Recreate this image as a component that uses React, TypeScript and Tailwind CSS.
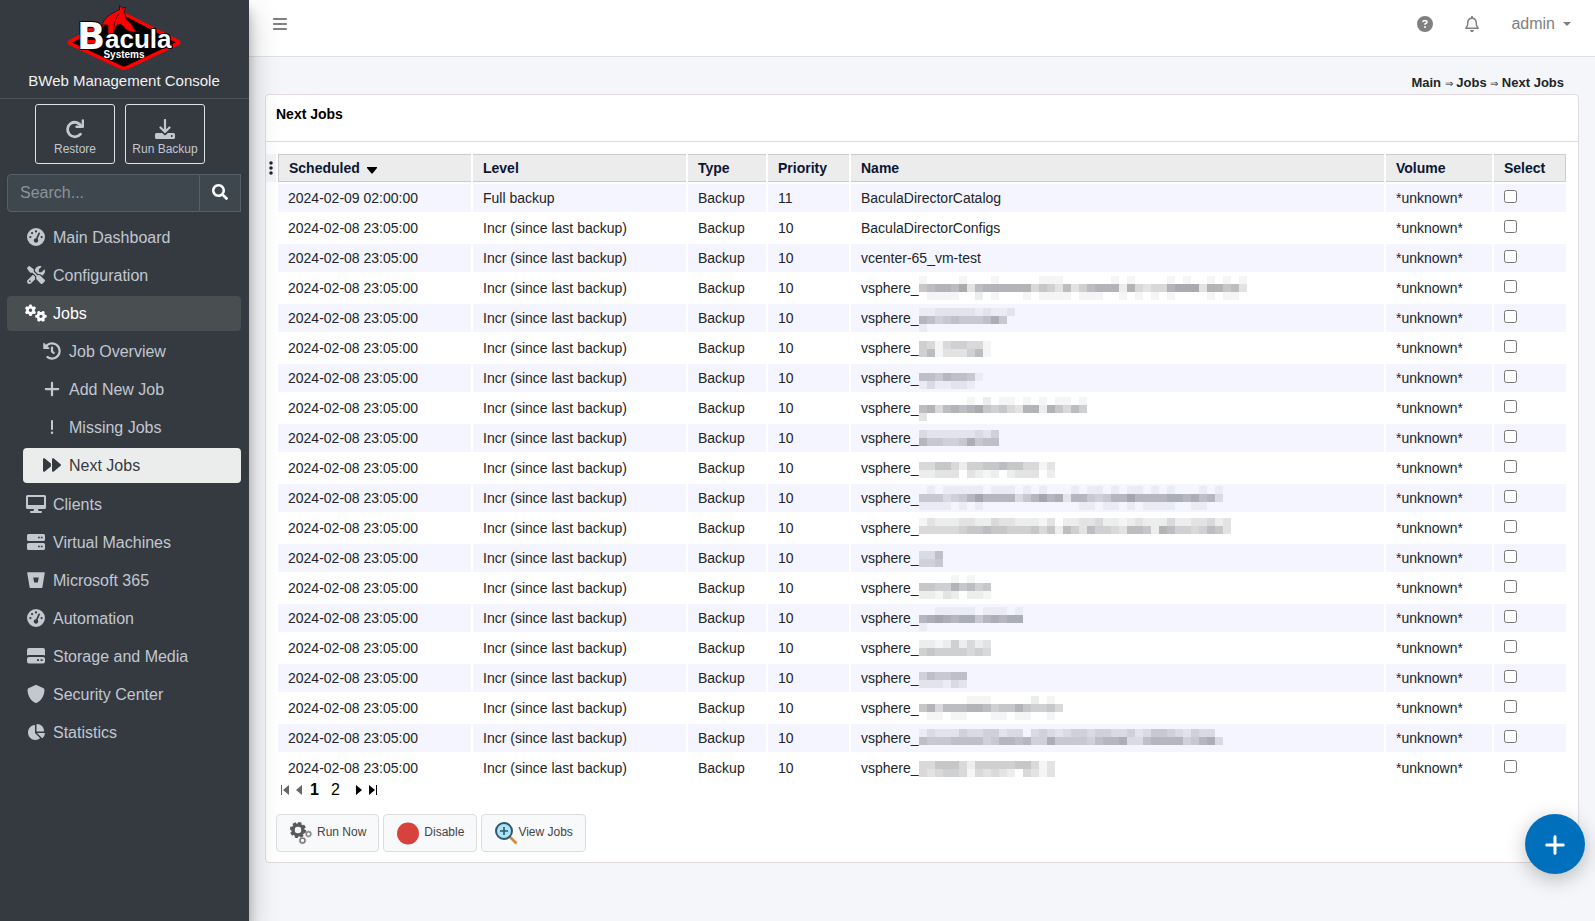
import { useState } from "react";
import type { ComponentType, ReactNode } from "react";
import clsx from "clsx";
import { FaHistory, FaSearch } from "react-icons/fa";
import {
  FaBars,
  FaBitbucket,
  FaChartPie,
  FaCircleQuestion,
  FaEllipsisVertical,
  FaExclamation,
  FaForward,
  FaGaugeHigh,
  FaGears,
  FaPlus,
  FaRegBell,
  FaScrewdriverWrench,
  FaShield
} from "react-icons/fa6";

type IconProps = { className?: string };

function DesktopIcon({ className }: IconProps) {
  return (
    <svg viewBox="0 0 20 18" className={className} fill="currentColor" aria-hidden="true">
      <path
        fillRule="evenodd"
        d="M1.500 0h17A1.500 1.500 0 0 1 20 1.500v11a1.500 1.500 0 0 1-1.500 1.500H12l.5 2h2.500a1 1 0 0 1 0 2H5a1 1 0 0 1 0-2h2.500l.5-2H1.500A1.500 1.500 0 0 1 0 12.500v-11A1.500 1.500 0 0 1 1.500 0ZM2 2v8h16V2Z"
      />
    </svg>
  );
}

function ServerIcon({ className }: IconProps) {
  return (
    <svg viewBox="0 0 18 18" className={className} fill="currentColor" fillRule="evenodd" aria-hidden="true">
      <path d="M1.500 1h15a1.500 1.500 0 0 1 1.500 1.500v4A1.500 1.500 0 0 1 16.500 8h-15A1.500 1.500 0 0 1 0 6.500v-4A1.500 1.500 0 0 1 1.500 1ZM11 3.700v1.600h1.800V3.700Zm2.800 0v1.600h1.800V3.700Z" />
      <path d="M1.500 10h15a1.500 1.500 0 0 1 1.500 1.500v4a1.500 1.500 0 0 1-1.500 1.500h-15A1.500 1.500 0 0 1 0 15.500v-4A1.500 1.500 0 0 1 1.500 10ZM11 12.700v1.600h1.800v-1.600Zm2.800 0v1.600h1.800v-1.600Z" />
    </svg>
  );
}

function DriveIcon({ className }: IconProps) {
  return (
    <svg viewBox="0 0 18 18" className={className} fill="currentColor" fillRule="evenodd" aria-hidden="true">
      <path d="M2 1h14a2 2 0 0 1 2 2v5.500q-.8-.5-2-.5H2q-1.200 0-2 .5V3a2 2 0 0 1 2-2Z" />
      <path d="M2 10h14a2 2 0 0 1 2 2v2.500a2 2 0 0 1-2 2H2a2 2 0 0 1-2-2V12a2 2 0 0 1 2-2Zm8 2.200v1.900h2v-1.900Zm3.600 0v1.900h2v-1.900Z" />
    </svg>
  );
}

type NavEntry = {
  label: string;
  icon: ComponentType<IconProps>;
  size?: string;
  children?: NavEntry[];
};

const NAV: NavEntry[] = [
  { label: "Main Dashboard", icon: FaGaugeHigh },
  { label: "Configuration", icon: FaScrewdriverWrench },
  {
    label: "Jobs",
    icon: FaGears,
    size: "size-[22px]",
    children: [
      { label: "Job Overview", icon: FaHistory },
      { label: "Add New Job", icon: FaPlus },
      { label: "Missing Jobs", icon: FaExclamation, size: "size-4" },
      { label: "Next Jobs", icon: FaForward }
    ]
  },
  { label: "Clients", icon: DesktopIcon, size: "h-[18px] w-5" },
  { label: "Virtual Machines", icon: ServerIcon },
  { label: "Microsoft 365", icon: FaBitbucket },
  { label: "Automation", icon: FaGaugeHigh },
  { label: "Storage and Media", icon: DriveIcon },
  { label: "Security Center", icon: FaShield },
  { label: "Statistics", icon: FaChartPie }
];

// Redacted part of a job name: one digit per 8px block, 0 is clear and 9 is darkest.
type Mask = { top: number; strips: string[] };

type Job = { scheduled: string; level: string; priority: number; name: string; mask?: Mask };

const incr = (name: string, mask?: Mask): Job => ({
  scheduled: "2024-02-08 23:05:00",
  level: "Incr (since last backup)",
  priority: 10,
  name,
  mask
});

const masked = (top: number, ...strips: string[]) => incr("vsphere_", { top, strips });

const JOBS: Job[] = [
  { scheduled: "2024-02-09 02:00:00", level: "Full backup", priority: 11, name: "BaculaDirectorCatalog" },
  incr("BaculaDirectorConfigs"),
  incr("vcenter-65_vm-test"),
  masked(
    2,
    "10000100010000011100000010100001010010101",
    "67887937888888465373578882843448999388673",
    "01111002010001011110111001010101000010110"
  ),
  masked(4, "112222212112", "76456555685", "1"),
  masked(7, "541455441", "571333571"),
  masked(9, "66576651", "1311221"),
  masked(3, "000000102011010101101", "784787896564388286475", "3"),
  masked(6, "3222222324", "7554458566"),
  masked(8, "44664255667664413", "22333032120233302"),
  masked(
    2,
    "01011111011101010001011010110101000101",
    "55534579777735797827754577977778878673",
    "11110101000000000000110110101111001100"
  ),
  masked(
    4,
    "132223322433222130223342212322242233423",
    "444445667665556462753755437762875545763"
  ),
  masked(7, "336", "445"),
  masked(1, "000010100", "665586756", "221320221"),
  masked(3, "0011111011101", "7898788578788", "1"),
  masked(6, "221252423", "565555454"),
  masked(8, "465566", "222132"),
  masked(2, "000000111000002010", "684777887566865564", "011011000110110010"),
  masked(
    5,
    "1322243344233034323443443342355432433",
    "65556666457767448555546778336777745783"
  ),
  masked(7, "44666425555566413", "43455414343204313")
];

function Logo() {
  return (
    <svg viewBox="0 0 114 66" className="h-[66px] w-[114px]" role="img" aria-label="Bacula Systems">
      <path d="M57 7 L112 35 Q115 37.500 112 40 L61 64 Q57 66 53 64 L2 40 Q-1 37.500 2 35 Z" fill="#f00" />
      <path d="M57 10.500 L109 37.500 L59 61 Q57 62 55 61 L5 37.500 Z" fill="#000" />
      <path
        d="M35 20 Q38 11 48 7 L50 5.500 L52.500 5 L52.500 0.500 L55.500 3 L59 2.500 L57 6.500 L58 9 L59 14 Q65 18 69 27 Q61 28 57 22 Q54 18 50 20 Q47 25 46 31 L41 37 L41 20 Z"
        fill="#f00"
        stroke="#111"
        strokeWidth="0.800"
      />
      <path d="M52 9 Q47 14 46.500 27" fill="none" stroke="#111" strokeWidth="0.800" />
      <g fontWeight="bold" fill="#fff" stroke="#000" strokeWidth="2" paintOrder="stroke" strokeLinejoin="round">
        <text x="10" y="44" fontSize="37" fontFamily="DejaVu Sans, sans-serif">
          B
        </text>
        <text x="38" y="43" fontSize="26" fontFamily="Liberation Sans, sans-serif">
          acula
        </text>
      </g>
      <path d="M21 23.500h6v3h-6zM21 35h7v3.500h-7z" fill="#f00" />
      <text x="57" y="53" textAnchor="middle" fontSize="10" fontWeight="bold" fontFamily="Liberation Sans, sans-serif" fill="#fff">
        Systems
      </text>
    </svg>
  );
}

function RestoreIcon() {
  return (
    <svg viewBox="0 0 20 20" className="mb-0.5 size-5" fill="none" stroke="currentColor" strokeWidth="2.800" aria-hidden="true">
      <path d="M15.500 15.200A7.300 7.300 0 1 1 16.500 7.500" strokeLinecap="round" />
      <path d="M17.800 1.500v6.300H11.500" strokeLinecap="round" strokeLinejoin="round" strokeWidth="2.400" />
    </svg>
  );
}

function BackupIcon() {
  return (
    <svg viewBox="0 0 20 20" className="mb-0.5 size-5" fill="none" aria-hidden="true">
      <path d="M10 1v11M5.500 8.500 10 13l4.500-4.500" stroke="currentColor" strokeWidth="2.200" strokeLinecap="round" strokeLinejoin="round" />
      <path
        fillRule="evenodd"
        d="M1.500 14H7l3 2.500 3-2.500h5.500a1.500 1.500 0 0 1 1.500 1.500v3a1.500 1.500 0 0 1-1.500 1.500h-17A1.500 1.500 0 0 1 0 18.500v-3A1.500 1.500 0 0 1 1.500 14Zm14.500 2v2h1.500v-2Z"
        fill="currentColor"
      />
    </svg>
  );
}

function NavItem({ entry, child, selected, onSelect }: {
  entry: NavEntry;
  child?: boolean;
  selected: string;
  onSelect: (label: string) => void;
}) {
  const Icon = entry.icon;
  const active = entry.label === selected;
  const open = entry.children?.some((item) => item.label === selected);

  return (
    <li>
      <a
        href="#"
        onClick={(event) => {
          event.preventDefault();
          if (!entry.children) onSelect(entry.label);
        }}
        className={clsx(
          "flex h-[35px] items-center rounded pl-[18px] text-base",
          active && child && "bg-[#ebedec] text-[#343a40]",
          ((active && !child) || open) && "bg-[#494e51] text-white",
          !active && !open && "text-[#c2c7d0]"
        )}
      >
        <span className="flex w-[22px] shrink-0 justify-center pb-0.5">
          <Icon className={entry.size ?? "size-[18px]"} />
        </span>
        <span className="ml-1.5">{entry.label}</span>
      </a>
      {entry.children && (
        <ul className="mt-[3px] flex flex-col gap-[3px] pb-px pl-4">
          {entry.children.map((item) => (
            <NavItem key={item.label} entry={item} child selected={selected} onSelect={onSelect} />
          ))}
        </ul>
      )}
    </li>
  );
}

function Sidebar() {
  const [selected, setSelected] = useState("Next Jobs");

  return (
    <aside className="z-10 flex w-[249px] shrink-0 flex-col bg-[#343a40] shadow-[0_14px_28px_rgba(0,0,0,0.25),0_10px_10px_rgba(0,0,0,0.22)]">
      <a href="#" className="flex flex-col items-center border-b border-[#4b545c] pt-[5px] pr-px text-[15px] leading-5 text-[#f0f1f2]">
        <Logo />
        <span className="pb-[7px]">BWeb Management Console</span>
      </a>

      <div className="mt-[5px] flex justify-center gap-[10px] pr-[9px]">
        <button type="button" className="flex h-[60px] w-20 flex-col items-center justify-end rounded-[3px] border border-[#dee2e6] pb-1.5 text-xs text-[#c2c7d0]">
          <RestoreIcon />
          Restore
        </button>
        <button type="button" className="flex h-[60px] w-20 flex-col items-center justify-end rounded-[3px] border border-[#dee2e6] pb-1.5 text-xs text-[#c2c7d0]">
          <BackupIcon />
          Run Backup
        </button>
      </div>

      <form className="mt-[10px] mr-2 ml-[7px] flex h-[38px]" onSubmit={(event) => event.preventDefault()}>
        <input
          type="search"
          aria-label="Search"
          placeholder="Search..."
          className="min-w-0 flex-1 rounded-l border border-[#56606a] bg-[#3f474e] px-3 text-base text-white outline-none placeholder:text-[#8b939b]"
        />
        <button type="submit" aria-label="Search" className="flex w-[41px] items-center justify-center border border-l-0 border-[#56606a] bg-[#3f474e] pb-0.5 text-white">
          <FaSearch className="size-4" />
        </button>
      </form>

      <nav className="mt-2 pr-2 pl-[7px]">
        <ul className="flex flex-col gap-[3px]">
          {NAV.map((entry) => (
            <NavItem key={entry.label} entry={entry} selected={selected} onSelect={setSelected} />
          ))}
        </ul>
      </nav>
    </aside>
  );
}

function TopBar() {
  return (
    <header className="flex h-[57px] items-start border-b border-[#dee2e6] bg-white pr-6 pl-[23px] text-[#808080]">
      <button type="button" aria-label="Toggle menu" className="mt-4">
        <FaBars className="size-4" />
      </button>
      <div className="mt-3 ml-auto flex h-6 items-center">
        <button type="button" aria-label="Help">
          <FaCircleQuestion className="size-4" />
        </button>
        <button type="button" aria-label="Notifications" className="ml-[31px]">
          <FaRegBell className="size-4" />
        </button>
        <button type="button" className="ml-[31px] flex items-center gap-2 text-base leading-6">
          admin
          <svg viewBox="0 0 8 4" className="h-1 w-2" aria-hidden="true">
            <path d="M0 0h8L4 4Z" fill="currentColor" />
          </svg>
        </button>
      </div>
    </header>
  );
}

function NameMask({ mask }: { mask: Mask }) {
  return (
    <svg viewBox="0 0 328 28" className="h-7 w-[328px] overflow-visible" shapeRendering="crispEdges" aria-hidden="true">
      {mask.strips.map((strip, row) =>
        [...strip].map((digit, col) => (
          <rect
            key={`${row}-${col}`}
            x={col * 8}
            y={mask.top + row * 8}
            width="8"
            height="8"
            fill="#1c2029"
            fillOpacity={Number(digit) * 0.042}
          />
        ))
      )}
    </svg>
  );
}

function JobsTable() {
  const headCell = "h-7 border-y border-[#ccc] bg-[#ececec] px-[10px] text-left font-bold text-[#0b1633]";

  return (
    <table className="w-full table-fixed border-separate border-spacing-0.5 text-sm leading-5 text-[#212529]">
      <colgroup>
        <col className="w-[193px]" />
        <col className="w-[213px]" />
        <col className="w-[78px]" />
        <col className="w-[81px]" />
        <col />
        <col className="w-[106px]" />
        <col className="w-[72px]" />
      </colgroup>
      <thead>
        <tr>
          <th scope="col" aria-sort="descending" className={clsx(headCell, "border-l")}>
            <button type="button" className="flex items-center gap-[7px] font-bold">
              Scheduled
              <svg viewBox="0 0 10 7" className="mt-1 h-[7px] w-[10px]" aria-hidden="true">
                <path d="M0 0h10v1L5.500 6.500h-1L0 1Z" fill="#000" />
              </svg>
            </button>
          </th>
          {["Level", "Type", "Priority", "Name", "Volume"].map((label) => (
            <th key={label} scope="col" className={headCell}>
              {label}
            </th>
          ))}
          <th scope="col" className={clsx(headCell, "border-r")}>
            Select
          </th>
        </tr>
      </thead>
      <tbody>
        {JOBS.map((job, index) => (
          <tr key={index} className="odd:*:bg-[#f5f5ff]">
            <td className="h-7 px-[10px]">{job.scheduled}</td>
            <td className="px-[10px]">{job.level}</td>
            <td className="px-[10px]">Backup</td>
            <td className="px-[10px]">{job.priority}</td>
            <td className="px-[10px]">
              <div className="flex h-7 items-center">
                {job.name}
                {job.mask && <NameMask mask={job.mask} />}
              </div>
            </td>
            <td className="px-[10px]">*unknown*</td>
            <td className="px-[10px]">
              <input type="checkbox" aria-label={`Select job ${index + 1}`} className="mb-1 block size-[13px]" />
            </td>
          </tr>
        ))}
      </tbody>
    </table>
  );
}

function Pager() {
  return (
    <nav aria-label="Pages" className="ml-[15px] flex h-3 items-center text-base leading-3 text-black">
      <button type="button" aria-label="First page" disabled>
        <svg viewBox="0 0 8 10" className="h-[10px] w-2" fill="#666" aria-hidden="true">
          <path d="M0 0h1v10H0zM8 0v10L2 5Z" />
        </svg>
      </button>
      <button type="button" aria-label="Previous page" disabled className="ml-[7px]">
        <svg viewBox="0 0 6 10" className="h-[10px] w-1.5" fill="#666" aria-hidden="true">
          <path d="M6 0v10L0 5Z" />
        </svg>
      </button>
      <button type="button" className="ml-2 font-bold">1</button>
      <button type="button" className="ml-3">2</button>
      <button type="button" aria-label="Next page" className="ml-4">
        <svg viewBox="0 0 6 10" className="h-[10px] w-1.5" aria-hidden="true">
          <path d="M0 0v10l6-5Z" />
        </svg>
      </button>
      <button type="button" aria-label="Last page" className="ml-[7px]">
        <svg viewBox="0 0 8 10" className="h-[10px] w-2" aria-hidden="true">
          <path d="M7 0h1v10H7zM0 0v10l6-5Z" />
        </svg>
      </button>
    </nav>
  );
}

function ActionButton({ label, icon }: { label: string; icon: ReactNode }) {
  return (
    <button type="button" className="flex h-[38px] items-center rounded border border-[#ddd] bg-[#f8f9fa] px-3 text-xs text-[#444]">
      {icon}
      <span className="pb-0.5">{label}</span>
    </button>
  );
}

const runIcon = (
  <svg viewBox="0 0 24 24" className="mr-1 size-6" fill="none" aria-hidden="true">
    <circle cx="9" cy="9" r="6.800" stroke="#555" strokeWidth="2.600" strokeDasharray="3.100 2.240" />
    <circle cx="9" cy="9" r="5" stroke="#5a5a5a" strokeWidth="3.600" />
    <circle cx="9" cy="9" r="3.100" fill="#f4f4f4" />
    <circle cx="19.500" cy="13" r="2.200" stroke="#8a8a8a" strokeWidth="1.400" />
    <circle cx="19.500" cy="13" r="3.200" stroke="#999" strokeWidth="0.900" strokeDasharray="1.200 0.800" />
    <circle cx="13.500" cy="19.500" r="2.400" stroke="#777" strokeWidth="1.400" />
    <circle cx="13.500" cy="19.500" r="3.400" stroke="#888" strokeWidth="0.900" strokeDasharray="1.200 0.900" />
  </svg>
);

const disableIcon = (
  <svg viewBox="0 0 24 24" className="mr-1 size-6" aria-hidden="true">
    <circle cx="12" cy="12.500" r="11" fill="#d7423d" />
  </svg>
);

const viewIcon = (
  <svg viewBox="0 0 24 24" className="size-6" fill="none" aria-hidden="true">
    <path d="m15.500 15.500 7 7" stroke="#d28b3c" strokeWidth="2.600" />
    <circle cx="10" cy="10" r="8" fill="#a5e4f9" stroke="#34566a" strokeWidth="2" />
    <path d="M10 6v8M6 10h8" stroke="#34566a" strokeWidth="1.600" />
  </svg>
);

export default function App() {
  return (
    <div className="flex min-h-screen bg-[#f4f6f9] font-['Liberation_Sans',Arial,sans-serif]">
      <Sidebar />
      <div className="min-w-0 flex-1">
        <TopBar />
        <main className="px-4">
          <nav aria-label="Breadcrumb" className="pt-4 pr-[15px] pb-px text-right text-[13px] leading-5 font-bold text-[#212529]">
            <a href="#">Main</a> <span className="text-[10px] leading-none font-normal">⇒</span> <a href="#">Jobs</a>{" "}
            <span className="text-[10px] leading-none font-normal">⇒</span> <a href="#">Next Jobs</a>
          </nav>
          <section className="rounded border border-[#e2dadd] bg-white pb-[10px]">
            <h1 className="h-[47px] border-b border-[#dcdcdc] px-[10px] pt-[9px] text-sm leading-5 font-bold text-black">
              Next Jobs
            </h1>
            <div className="flex items-start pt-[10px] pr-[10px]">
              <button type="button" aria-label="Columns" className="mt-0.5 flex h-7 w-[10px] shrink-0 items-center justify-center bg-[#f4f5f8] text-[#212529]">
                <FaEllipsisVertical className="size-4 shrink-0" />
              </button>
              <JobsTable />
            </div>
            <Pager />
            <div className="mt-[18px] ml-[10px] flex gap-1">
              <ActionButton label="Run Now" icon={runIcon} />
              <ActionButton label="Disable" icon={disableIcon} />
              <ActionButton label="View Jobs" icon={viewIcon} />
            </div>
          </section>
        </main>
      </div>
      <button
        type="button"
        aria-label="Add"
        className="fixed right-[10px] bottom-[47px] z-20 flex size-[60px] items-center justify-center rounded-full bg-[#0070bd] pt-0.5 text-white shadow-[0_5px_20px_rgba(0,0,0,0.25)]"
      >
        <FaPlus className="size-6" />
      </button>
    </div>
  );
}
